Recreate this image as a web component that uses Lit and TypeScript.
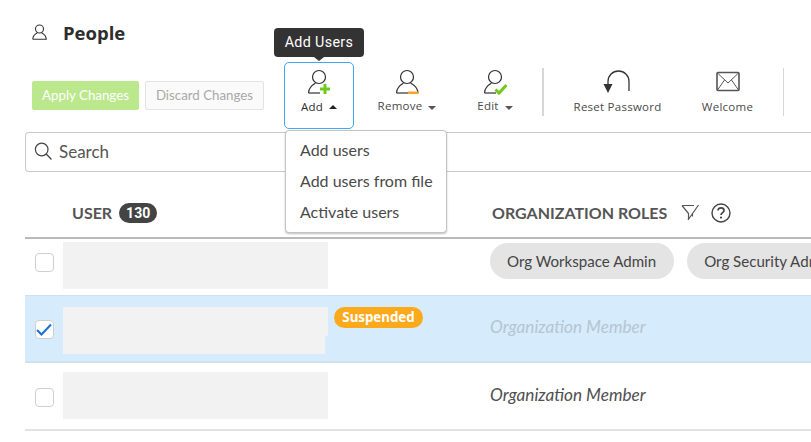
import { LitElement, html, css, svg } from "lit";
import { customElement } from "lit/decorators.js";

const person = (right: boolean) => svg`
  <circle cx="13" cy="8" r="6.5" fill="none" stroke="#2f2f2f" stroke-width="1.2"/>
  <path d="M2.5 24 C2.5 19.5 5.5 16.5 9.5 14" fill="none" stroke="#2f2f2f" stroke-width="1.2"/>
  <path d="M2.5 24 H${right ? 24 : 14}" fill="none" stroke="#2f2f2f" stroke-width="1.2"/>
  ${right ? svg`<path d="M16.5 14 C21 16.5 24 19.5 24 24" fill="none" stroke="#2f2f2f" stroke-width="1.2"/>` : ""}
`;

@customElement("app-root")
export class AppRoot extends LitElement {
  static styles = css`
    :host { display: block; width: 811px; height: 442px; overflow: hidden; position: relative; background: #fff; font-family: Lato, sans-serif; color: #4a4a4a; }
    .title { height: 62px; box-sizing: border-box; padding: 23px 0 0 32px; display: flex; align-items: flex-start; gap: 16px; }
    .title svg { display: block; margin-top: 1px; }
    .title h1 { margin: 0; font: 700 18.5px/19px "Open Sans", sans-serif; color: #2d2d2d; }
    .toolbar { height: 67px; display: flex; padding-left: 32px; position: relative; }
    .actions { width: 252px; display: flex; gap: 6px; padding-top: 19px; box-sizing: border-box; }
    .btn { height: 29px; box-sizing: border-box; border-radius: 2px; font: 400 13.3px/26px Lato, sans-serif; text-align: center; }
    .apply { width: 107px; background: #bbe88c; border: 1px solid #bbe88c; color: #fff; }
    .discard { width: 119px; background: #fafafa; border: 1px solid #e3e3e3; color: #a9a9a9; }
    .tool { display: flex; flex-direction: column; align-items: center; box-sizing: border-box; padding-top: 7px; flex: none; }
    .tool svg.ic { display: block; width: 26px; height: 26px; overflow: visible; }
    .tool .lab { font: 400 11.5px/14px "Open Sans", sans-serif; color: #4a4a4a; margin-top: 4px; letter-spacing: .25px; white-space: nowrap; display: flex; align-items: center; gap: 6px; }
    .add { width: 70px; border: 1px solid #3ea9f5; border-radius: 5px; padding-top: 6px; }
    .add .lab { color: #2d2d2d; margin-top: 5px; }
    .remove { width: 106px; }
    .edit { width: 70px; }
    .reset { width: 147px; }
    .welcome { width: 73px; }
    .reset .lab, .welcome .lab { margin-top: 5px; }
    .caret { width: 0; height: 0; border-left: 4px solid transparent; border-right: 4px solid transparent; border-top: 4px solid #555; margin-top: 3px; }
    .caret.up { border-top: 0; border-bottom: 4px solid #222; margin-top: 0; }
    .div { width: 2px; height: 48px; background: #d6d6d6; margin-top: 6px; flex: none; }
    .div.d1 { margin-left: 12px; }
    .div.d2 { width: 1px; margin-left: 19px; }
    .search { margin: 3px 0 0 25px; height: 40px; box-sizing: border-box; border: 1px solid #c8c8c8; border-right: 0; border-radius: 4px 0 0 4px; display: flex; align-items: center; padding: 0 0 2px 8px; gap: 7px; font: 400 17px Lato, sans-serif; color: #555; }
    .thead { margin-left: 25px; height: 67px; box-sizing: border-box; border-bottom: 2px solid #b9b9b9; display: grid; grid-template-columns: 420px 1fr; padding: 31px 0 0 47px; font: 700 16px/20px Lato, sans-serif; color: #555; }
    .thead .u, .thead .r { height: 20px; display: flex; align-items: center; }
    .thead .u { gap: 7px; }
    .badge { background: #444; color: #fff; border-radius: 10px; height: 20px; width: 38px; text-align: center; font: 700 14px/20px Roboto, sans-serif; }
    .fil { margin-left: 14px; display: block; }
    .hlp { margin-left: 12px; display: block; }
    .row { margin-left: 25px; display: grid; grid-template-columns: 38px 427px 1fr; box-sizing: border-box; white-space: nowrap; overflow: hidden; }
    .r1 { height: 56px; padding-top: 3px; }
    .r2 { height: 68px; background: #d6ebfc; border-top: 1px solid #cfe0ee; border-bottom: 2px solid #cfe0ee; padding-top: 11px; }
    .r3 { height: 68px; padding-top: 9px; border-bottom: 2px solid #e2e2e2; }
    .chk { width: 19px; height: 19px; box-sizing: border-box; border: 1.5px solid #cfcfcf; border-radius: 4px; background: #fff; margin-left: 10px; }
    .r1 .chk { margin-top: 11px; }
    .r2 .chk { margin-top: 13px; }
    .r3 .chk { margin-top: 16px; }
    .chk svg { display: block; }
    .user { display: flex; align-items: flex-start; gap: 6px; }
    .blank { width: 265px; height: 47px; background: #f2f2f2; }
    .stack { width: 265px; }
    .stack .a { height: 29px; background: #f2f2f2; }
    .stack .b { height: 18px; width: 262px; background: #f2f2f2; }
    .susp { background: #fcaa1c; color: #fff; border-radius: 11px; height: 21px; width: 89px; text-align: center; font: 700 13.3px/21px "Noto Sans", sans-serif; }
    .roles { display: flex; gap: 13px; padding-top: 1px; }
    .chip { height: 36px; box-sizing: border-box; padding: 0 18px 0 17px; border-radius: 18px; background: #e4e4e4; font: 400 15.1px/36px Lato, sans-serif; color: #444; flex: none; }
    .member { font: italic 400 17.2px/1 Lato, sans-serif; color: #4f4f4f; padding-top: 11px; }
    .r3 .member { padding-top: 14px; }
    .r2 .member { color: #b5c5d2; }
    .tip { position: absolute; left: 274px; top: 28px; width: 90px; height: 29px; background: #333; color: #fff; border-radius: 4px; font: 400 14.3px/29px Roboto, sans-serif; letter-spacing: .35px; text-align: center; }
    .tip::after { content: ""; position: absolute; left: 40px; top: 29px; border: 5px solid transparent; border-top: 4px solid #333; border-bottom: 0; }
    .menu { position: absolute; left: 285px; top: 130px; width: 162px; height: 103px; box-sizing: border-box; background: #fff; border: 1px solid #c4c4c4; border-radius: 4px; box-shadow: 0 1px 2px rgba(0,0,0,.25); padding: 3px 0 0 14px; font: 400 16px/31px Lato, sans-serif; color: #4a4a4a; }
    .menu div { white-space: nowrap; }
  `;

  render() {
    return html`
      <div class="title">
        <svg width="15" height="16" viewBox="0 0 15 16"><circle cx="7.5" cy="5" r="4" fill="none" stroke="#333" stroke-width="1.1"/><path d="M.7 15.3 C1 12 3 10 5.2 9 M9.8 9 C12 10 14 12 14.3 15.3 H.7" fill="none" stroke="#333" stroke-width="1.1"/></svg>
        <h1>People</h1>
      </div>
      <div class="toolbar">
        <div class="actions">
          <div class="btn apply">Apply Changes</div>
          <div class="btn discard">Discard Changes</div>
        </div>
        <div class="tool add">
          <svg class="ic" viewBox="0 0 26 26">${person(false)}<path d="M19 15 V25 M14 20 H24" stroke="#72c91e" stroke-width="3" fill="none"/></svg>
          <div class="lab">Add <span class="caret up"></span></div>
        </div>
        <div class="tool remove">
          <svg class="ic" viewBox="0 0 26 26">${person(true)}<rect x="14" y="22.5" width="10.5" height="2.6" fill="#f5a623"/></svg>
          <div class="lab">Remove <span class="caret"></span></div>
        </div>
        <div class="tool edit">
          <svg class="ic" viewBox="0 0 26 26">${person(false)}<path d="M13.5 20.5 L17 24 L24.5 16" stroke="#72c91e" stroke-width="3" fill="none"/></svg>
          <div class="lab">Edit <span class="caret"></span></div>
        </div>
        <div class="div d1"></div>
        <div class="tool reset">
          <svg class="ic" viewBox="0 0 26 26"><path d="M24 22 V12.5 A10.5 10.5 0 0 0 3 12.5 V16" fill="none" stroke="#333" stroke-width="1.3"/><path d="M-1.5 15 H7.5 L3 24 Z" fill="#333"/></svg>
          <div class="lab">Reset Password</div>
        </div>
        <div class="tool welcome">
          <svg class="ic" viewBox="0 0 26 26"><rect x="2" y="3.5" width="22" height="18" rx="1" fill="none" stroke="#555" stroke-width="1.6"/><path d="M2.5 4 L13 14 L23.5 4 M2.5 21 L9.5 11 M23.5 21 L16.5 11" fill="none" stroke="#555" stroke-width="1"/></svg>
          <div class="lab">Welcome</div>
        </div>
        <div class="div d2"></div>
      </div>
      <div class="search">
        <svg width="18" height="18" viewBox="0 0 18 18"><circle cx="7.7" cy="7.5" r="6.3" fill="none" stroke="#444" stroke-width="1.2"/><path d="M12.2 12 L17.5 17.5" stroke="#444" stroke-width="1.3"/></svg>
        <span>Search</span>
      </div>
      <div class="thead">
        <div class="u">USER <span class="badge">130</span></div>
        <div class="r">ORGANIZATION ROLES
          <svg class="fil" width="18" height="18" viewBox="0 0 18 18"><path d="M1 1.5 H13 M1 1.5 L7.5 9.5 V15.5 M7 16 L17.5 1 M11.5 10 V12.5" fill="none" stroke="#555" stroke-width="1.2"/></svg>
          <svg class="hlp" width="20" height="20" viewBox="0 0 20 20"><circle cx="10" cy="10" r="9" fill="none" stroke="#444" stroke-width="1.4"/><path d="M7 7.6 C7 3.8 13 4 13 7.4 C13 9.6 10 9.6 10 12" fill="none" stroke="#444" stroke-width="1.7"/><circle cx="10" cy="14.6" r="1.1" fill="#444"/></svg>
        </div>
      </div>
      <div class="row r1">
        <div><div class="chk"></div></div>
        <div class="user"><div class="blank"></div></div>
        <div class="roles"><div class="chip">Org Workspace Admin</div><div class="chip">Org Security Admin</div></div>
      </div>
      <div class="row r2">
        <div><div class="chk"><svg width="16" height="16" viewBox="0 0 16 16"><path d="M1 9 L5.5 13.5 L15 3.5" fill="none" stroke="#1a6fd8" stroke-width="2"/></svg></div></div>
        <div class="user"><div class="stack"><div class="a"></div><div class="b"></div></div><div class="susp">Suspended</div></div>
        <div class="member">Organization Member</div>
      </div>
      <div class="row r3">
        <div><div class="chk"></div></div>
        <div class="user"><div class="blank"></div></div>
        <div class="member">Organization Member</div>
      </div>
      <div class="tip">Add Users</div>
      <div class="menu"><div>Add users</div><div>Add users from file</div><div>Activate users</div></div>
    `;
  }
}
